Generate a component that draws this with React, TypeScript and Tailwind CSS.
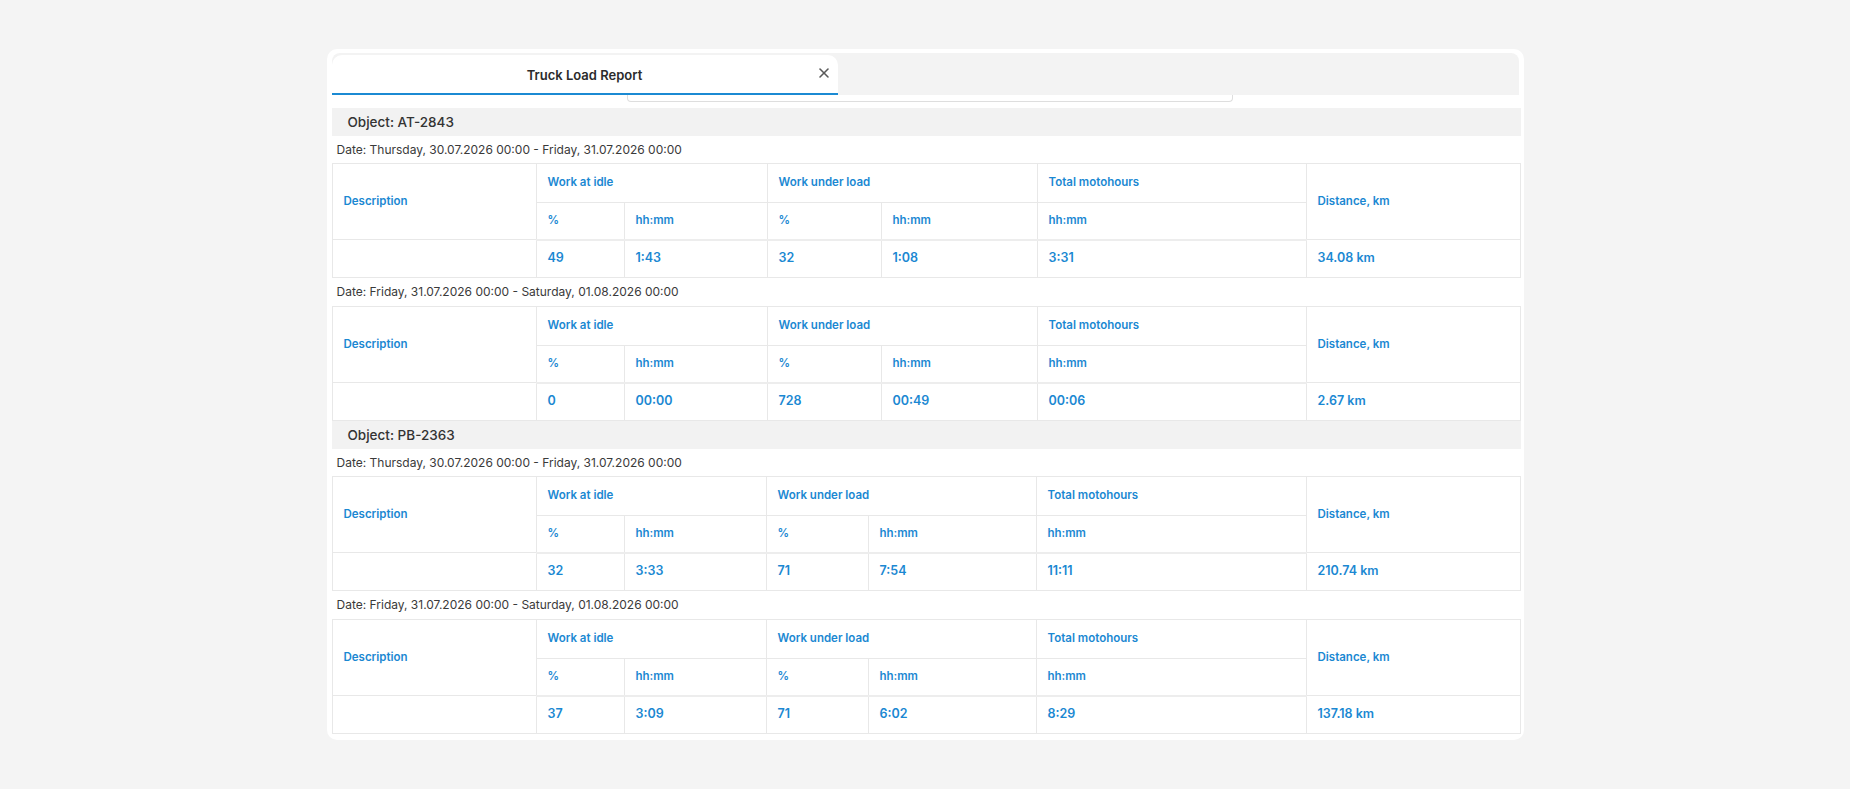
import { X } from "lucide-react";

type Row = {
  idlePct: string;
  idleTime: string;
  loadPct: string;
  loadTime: string;
  total: string;
  distance: string;
};

type Section = {
  object: string;
  cols: number[];
  days: { date: string; row: Row }[];
};

const sections: Section[] = [
  {
    object: "AT-2843",
    cols: [204, 88, 143, 114, 156, 269, 214],
    days: [
      {
        date: "Date: Thursday, 30.07.2026 00:00 - Friday, 31.07.2026 00:00",
        row: { idlePct: "49", idleTime: "1:43", loadPct: "32", loadTime: "1:08", total: "3:31", distance: "34.08 km" },
      },
      {
        date: "Date: Friday, 31.07.2026 00:00 - Saturday, 01.08.2026 00:00",
        row: { idlePct: "0", idleTime: "00:00", loadPct: "728", loadTime: "00:49", total: "00:06", distance: "2.67 km" },
      },
    ],
  },
  {
    object: "PB-2363",
    cols: [204, 88, 142, 102, 168, 270, 214],
    days: [
      {
        date: "Date: Thursday, 30.07.2026 00:00 - Friday, 31.07.2026 00:00",
        row: { idlePct: "32", idleTime: "3:33", loadPct: "71", loadTime: "7:54", total: "11:11", distance: "210.74 km" },
      },
      {
        date: "Date: Friday, 31.07.2026 00:00 - Saturday, 01.08.2026 00:00",
        row: { idlePct: "37", idleTime: "3:09", loadPct: "71", loadTime: "6:02", total: "8:29", distance: "137.18 km" },
      },
    ],
  },
];

const th = "border border-[#e8e8e8] px-[11px] text-left align-middle text-[11.5px] font-semibold text-[#1b88d2]";
const td = "border border-[#e8e8e8] px-[11px] text-left align-middle text-[12.5px] font-semibold text-[#1b88d2]";
const sub = `${th} border-b-2 border-b-[#ededed]`;

function DayTable({ cols, row }: { cols: number[]; row: Row }) {
  return (
    <table className="w-[1188px] table-fixed border-collapse">
      <colgroup>
        {cols.map((w, i) => (
          <col key={i} style={{ width: w }} />
        ))}
      </colgroup>
      <thead>
        <tr className="h-[39px]">
          <th rowSpan={2} className={th}>Description</th>
          <th colSpan={2} className={th}>Work at idle</th>
          <th colSpan={2} className={th}>Work under load</th>
          <th className={th}>Total motohours</th>
          <th rowSpan={2} className={th}>Distance, km</th>
        </tr>
        <tr className="h-[37px]">
          <th className={sub}>%</th>
          <th className={sub}>hh:mm</th>
          <th className={sub}>%</th>
          <th className={sub}>hh:mm</th>
          <th className={sub}>hh:mm</th>
        </tr>
      </thead>
      <tbody>
        <tr className="h-[38px]">
          <td className={td}></td>
          <td className={td}>{row.idlePct}</td>
          <td className={td}>{row.idleTime}</td>
          <td className={td}>{row.loadPct}</td>
          <td className={td}>{row.loadTime}</td>
          <td className={td}>{row.total}</td>
          <td className={td}>{row.distance}</td>
        </tr>
      </tbody>
    </table>
  );
}

export default function App() {
  return (
    <div
      className="h-[789px] w-full overflow-hidden bg-[#f4f4f4] pt-[49px]"
      style={{ fontFamily: "Inter, 'Noto Sans', sans-serif" }}
    >
      <div className="mx-auto h-[691px] w-[1197px] rounded-[10px] bg-white pl-[5px] pr-[3px] pt-[4px]">
        {/* tab bar */}
        <div className="flex h-[42px] w-[1187px] items-end rounded-t-[8px] bg-[#f3f3f3]">
          <div className="relative flex h-[40px] w-[506px] items-center justify-center rounded-t-[10px] border-b-2 border-[#1b8ad3] bg-white pt-[3px]">
            <span className="text-[13px] font-semibold text-[#2b2b2b]">Truck Load Report</span>
            <X className="absolute right-[6px] top-[10px] h-[16px] w-[16px] text-[#5a5a5a]" strokeWidth={2.3} />
          </div>
        </div>

        {/* dropdown edge peeking out from below the tabs */}
        <div className="ml-[295px] h-[7px] w-[606px] rounded-b-[4px] border-x border-b border-[#dedede]" />

        <div className="mt-[6px]">
          {sections.map((s) => (
            <div key={s.object}>
              <div className="flex h-[28px] items-center bg-[#f2f2f2] px-[16px] text-[13.5px] font-medium text-[#333]">
                Object: {s.object}
              </div>
              {s.days.map((d, i) => (
                <div key={i}>
                  <div className={`flex items-center px-[5px] text-[12px] text-[#3a3a3a] ${i === 0 ? "h-[27px]" : "h-[28px]"}`}>
                    {d.date}
                  </div>
                  <DayTable cols={s.cols} row={d.row} />
                </div>
              ))}
            </div>
          ))}
        </div>
      </div>
    </div>
  );
}
